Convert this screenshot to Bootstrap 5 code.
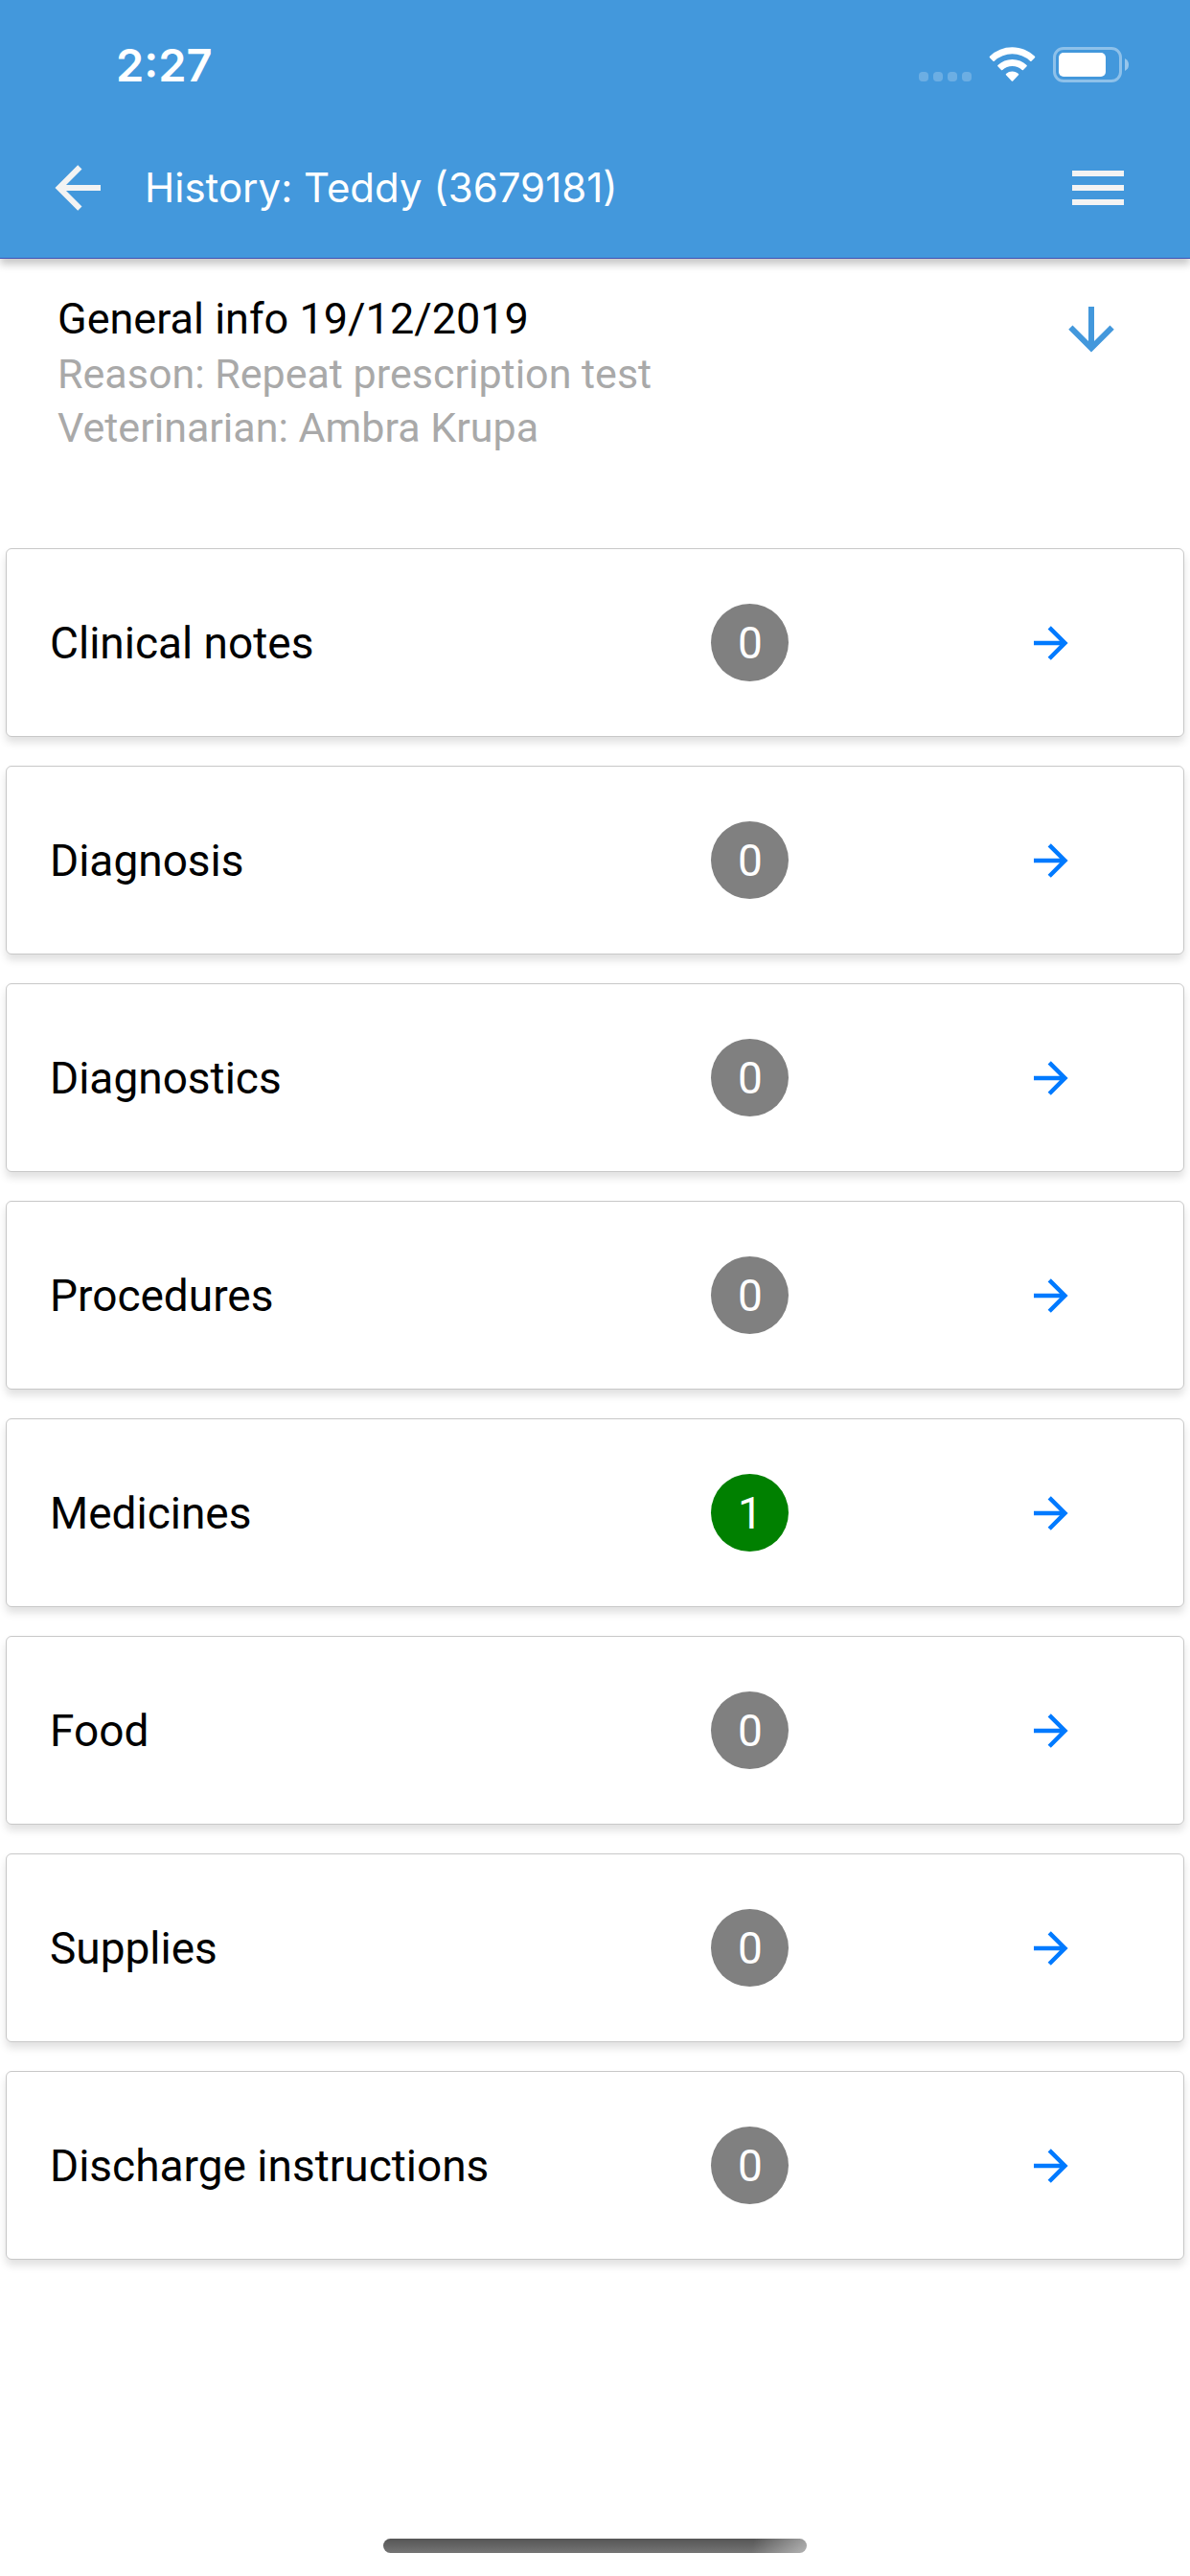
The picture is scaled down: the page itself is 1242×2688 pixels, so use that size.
<!DOCTYPE html>
<html lang="en">
<head>
<meta charset="utf-8">
<meta name="viewport" content="width=device-width, initial-scale=1">
<title>History: Teddy (3679181)</title>
<link href="https://cdn.jsdelivr.net/npm/bootstrap@5.3.0/dist/css/bootstrap.min.css" rel="stylesheet">
<style>
  body { font-family: Roboto, "Noto Sans", sans-serif; color: #000; background: #fff; }
  .app-header { background: #4398dc; border-bottom: 1px solid #3f51b5; box-shadow: 0 6px 8px rgba(0,0,0,.22); }
  .status-bar { height: 132px; padding: 3px 64px 0 121px; font-family: Inter, "Liberation Sans", sans-serif; }
  .clock { font-size: 47px; line-height: 56px; font-weight: 600; }
  .title-bar { padding: 28px 60px 37px 45px; gap: 34px; }
  .title-bar h1 { font-family: Inter, "Liberation Sans", sans-serif; font-size: 42px; line-height: 72px; font-weight: 400; }
  .icon-btn { border: 0; padding: 0; background: none; color: #f3f3f3; line-height: 0; }
  .icon-btn svg { width: 72px; height: 72px; fill: currentColor; }
  .info { padding: 38px 67px 98px 60px; }
  .info h2 { margin: 0 0 4px; font-size: 45px; line-height: 50px; font-weight: 400; }
  .info p { font-size: 43px; line-height: 56px; color: #a9a9a9; }
  .info .icon-btn { color: #4398dc; }
  .sections { gap: 30px; padding: 0 6px; }
  .section-card { height: 197px; padding: 0 111px 0 45px; border: 1px solid #c8c8c8; border-radius: 6px; background: #fff; color: #000;
    box-shadow: 0 6px 9px rgba(0,0,0,.12); font-size: 46px; line-height: 60px; }
  .count { width: 81px; height: 81px; margin-right: 23%; background: #808080; color: #fff; }
  .count.filled { background: #008000; }
  .section-card svg { width: 54px; height: 54px; fill: #007aff; }
  .home-bar { width: 442px; height: 15px; margin-bottom: 24px; border-radius: 8px;
    background: linear-gradient(100deg, transparent 87%, rgba(255,255,255,.45) 100%), linear-gradient(#555, #757575); }
</style>
</head>
<body>
<svg class="d-none" aria-hidden="true">
  <symbol id="arrow-left" viewBox="0 0 24 24"><path d="M20 11v2H8l5.5 5.5-1.42 1.42L4.16 12l7.92-7.92L13.5 5.5 8 11z"/></symbol>
  <symbol id="arrow-right" viewBox="0 0 24 24"><path d="M4 11v2h12l-5.5 5.5 1.42 1.42L19.84 12l-7.92-7.92L10.5 5.5 16 11z"/></symbol>
  <symbol id="arrow-down" viewBox="0 0 24 24"><path d="M11 4h2v12l5.5-5.5 1.42 1.42L12 19.84l-7.92-7.92L5.5 10.5 11 16z"/></symbol>
  <symbol id="menu" viewBox="0 0 24 24"><path d="M3 6h18v2H3zM3 11h18v2H3zM3 16h18v2H3z"/></symbol>
</svg>
<div class="d-flex flex-column min-vh-100">
  <header class="app-header text-white">
    <div class="status-bar d-flex align-items-center justify-content-between">
      <span class="clock">2:27</span>
      <svg width="220" height="38" viewBox="0 0 220 38" fill="#fff" role="img" aria-label="Wi-Fi on, battery 75%">
        <g opacity=".22"><rect x="1" y="26" width="10" height="10" rx="4"/><rect x="16" y="26" width="10" height="10" rx="4"/><rect x="31" y="26" width="10" height="10" rx="4"/><rect x="46" y="26" width="10" height="10" rx="4"/></g>
        <path d="M98.500 0.300C107.500 0.300 115.800 3.900 122 9.800Q122.600 10.500 122 11.200L118.500 14.700Q117.900 15.300 117.200 14.700A27.500 27.500 0 0 0 79.800 14.700Q79.100 15.300 78.500 14.700L75 11.200Q74.400 10.500 75 9.800A34 34 0 0 1 98.500 0.300z"/>
        <path d="M98.500 13C104.300 13 109.600 15.300 113.600 19Q114.200 19.700 113.600 20.300L110 24Q109.400 24.500 108.700 24A15 15 0 0 0 88.300 24Q87.600 24.500 87 24L83.400 20.300Q82.800 19.700 83.400 19A22 22 0 0 1 98.500 13z"/>
        <path d="M98.500 25.500C101 25.500 103.300 26.400 105 27.900Q105.600 28.600 105 29.200L99.200 35.500Q98.500 36.100 97.800 35.500L92 29.200Q91.400 28.600 92 27.900A10 10 0 0 1 98.500 25.500z"/>
        <rect x="142.500" y="1.500" width="69" height="34" rx="9.500" fill="none" stroke="#fff" stroke-width="3" opacity=".4"/>
        <rect x="147" y="6" width="49" height="25" rx="5"/>
        <path d="M216 12q4 2 4 6.500t-4 6.500z" opacity=".45"/>
      </svg>
    </div>
    <div class="title-bar d-flex align-items-center">
      <button class="icon-btn" type="button" aria-label="Back"><svg><use href="#arrow-left"/></svg></button>
      <h1 class="m-0 flex-grow-1">History: Teddy (3679181)</h1>
      <button class="icon-btn" type="button" aria-label="Menu"><svg><use href="#menu"/></svg></button>
    </div>
  </header>
  <main>
    <section class="info d-flex align-items-start justify-content-between">
      <div>
        <h2>General info 19/12/2019</h2>
        <p class="m-0">Reason: Repeat prescription test</p>
        <p class="m-0">Veterinarian: Ambra Krupa</p>
      </div>
      <button class="icon-btn" type="button" aria-label="Expand general info"><svg><use href="#arrow-down"/></svg></button>
    </section>
    <nav class="sections d-flex flex-column" aria-label="History sections">
      <a href="#" class="section-card d-flex align-items-center text-decoration-none"><span class="flex-grow-1">Clinical notes</span><span class="count rounded-circle d-flex align-items-center justify-content-center">0</span><svg aria-hidden="true"><use href="#arrow-right"/></svg></a>
      <a href="#" class="section-card d-flex align-items-center text-decoration-none"><span class="flex-grow-1">Diagnosis</span><span class="count rounded-circle d-flex align-items-center justify-content-center">0</span><svg aria-hidden="true"><use href="#arrow-right"/></svg></a>
      <a href="#" class="section-card d-flex align-items-center text-decoration-none"><span class="flex-grow-1">Diagnostics</span><span class="count rounded-circle d-flex align-items-center justify-content-center">0</span><svg aria-hidden="true"><use href="#arrow-right"/></svg></a>
      <a href="#" class="section-card d-flex align-items-center text-decoration-none"><span class="flex-grow-1">Procedures</span><span class="count rounded-circle d-flex align-items-center justify-content-center">0</span><svg aria-hidden="true"><use href="#arrow-right"/></svg></a>
      <a href="#" class="section-card d-flex align-items-center text-decoration-none"><span class="flex-grow-1">Medicines</span><span class="count filled rounded-circle d-flex align-items-center justify-content-center">1</span><svg aria-hidden="true"><use href="#arrow-right"/></svg></a>
      <a href="#" class="section-card d-flex align-items-center text-decoration-none"><span class="flex-grow-1">Food</span><span class="count rounded-circle d-flex align-items-center justify-content-center">0</span><svg aria-hidden="true"><use href="#arrow-right"/></svg></a>
      <a href="#" class="section-card d-flex align-items-center text-decoration-none"><span class="flex-grow-1">Supplies</span><span class="count rounded-circle d-flex align-items-center justify-content-center">0</span><svg aria-hidden="true"><use href="#arrow-right"/></svg></a>
      <a href="#" class="section-card d-flex align-items-center text-decoration-none"><span class="flex-grow-1">Discharge instructions</span><span class="count rounded-circle d-flex align-items-center justify-content-center">0</span><svg aria-hidden="true"><use href="#arrow-right"/></svg></a>
    </nav>
  </main>
  <div class="home-bar mt-auto mx-auto"></div>
</div>
<script src="https://cdn.jsdelivr.net/npm/bootstrap@5.3.0/dist/js/bootstrap.bundle.min.js"></script>
</body>
</html>
